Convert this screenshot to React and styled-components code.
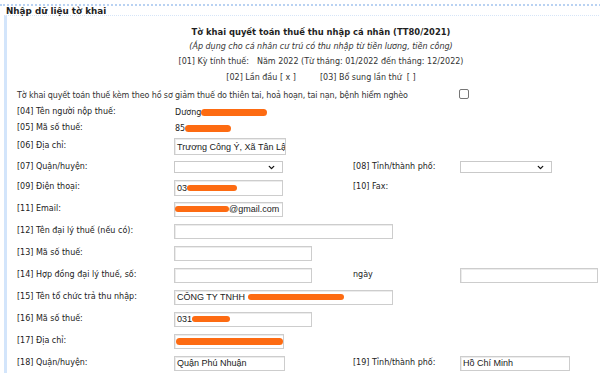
import React from "react";
import styled, { createGlobalStyle } from "styled-components";
import { ChevronDown } from "lucide-react";

const GlobalStyle = createGlobalStyle`
  html, body {
    margin: 0;
    padding: 0;
    background: #fff;
    overflow: hidden;
  }
  body {
    font-family: "DejaVu Sans", Verdana, sans-serif;
    font-size: 8px;
    color: #2b2b2b;
  }
`;

const Page = styled.div`
  width: 640px;
  padding-top: 4px;
`;

const Legend = styled.div`
  border-top: 2px dotted #b9d2f2;
  height: 9px;
  padding: 0 0 0 6px;
  font-size: 8.8px;
  line-height: 10px;
  font-weight: 700;
  color: #1f1f1f;
`;

const Panel = styled.div`
  margin-left: 4px;
  width: 628px;
  border-left: 3px solid #d3e5fb;
  border-top: 1px dotted #d6e5f8;
  padding-top: 8px;
`;

const Center = styled.div`
  height: ${(p) => p.$h || 15}px;
  display: flex;
  justify-content: center;
  align-items: center;
  gap: ${(p) => p.$gap || 0}px;
  font-size: ${(p) => (p.$bold ? 8.4 : 8)}px;
  font-weight: ${(p) => (p.$bold ? 700 : 400)};
  font-style: ${(p) => (p.$italic ? "italic" : "normal")};
  color: ${(p) => (p.$bold ? "#1f1f1f" : "#333")};
  white-space: pre;
`;

const Row = styled.div`
  display: grid;
  grid-template-columns: 157px 179px 107px 1fr;
  align-items: center;
  height: ${(p) => p.$h}px;
  padding-left: 10px;
`;

const Wide = styled.div`
  grid-column: 1 / 4;
  color: #333;
  white-space: nowrap;
  letter-spacing: -0.12px;
`;

const Label = styled.div`
  color: #222;
  padding-bottom: 2px;
  white-space: nowrap;
`;

const Value = styled.div`
  display: flex;
  align-items: center;
  color: #222;
  padding-left: 1px;
`;

const Field = styled.div`
  box-sizing: border-box;
  width: ${(p) => p.$w}px;
  height: ${(p) => p.$h || 15}px;
  border: 1px solid #cdcdcd;
  box-shadow: inset 1px 1px 0 #ececec;
  background: #fff;
  display: flex;
  align-items: center;
  padding-left: 2px;
  font-family: "Liberation Sans", Arial, sans-serif;
  font-size: 9px;
  color: #1a1a1a;
  overflow: hidden;
  white-space: nowrap;
`;

const Select = styled.div`
  box-sizing: border-box;
  width: ${(p) => p.$w}px;
  height: 12px;
  border: 1px solid #c9c9c9;
  background: #fff;
  display: flex;
  justify-content: flex-end;
  align-items: center;
  padding-right: 6px;
  color: #111;
`;

const Blob = styled.span`
  display: inline-block;
  width: ${(p) => p.$w}px;
  height: ${(p) => p.$h || 6}px;
  background: #fd6b12;
  border-radius: 4px;
  margin-left: ${(p) => p.$ml || 0}px;
  filter: blur(0.3px);
`;

const Check = styled.span`
  display: inline-block;
  width: 8px;
  height: 8px;
  border: 1px solid #767676;
  border-radius: 2px;
  margin-left: -1px;
`;

export default function App() {
  return (
    <Page>
      <GlobalStyle />
      <Legend>Nhập dữ liệu tờ khai</Legend>
      <Panel>
        <Center $bold>Tờ khai quyết toán thuế thu nhập cá nhân (TT80/2021)</Center>
        <Center $italic>(Áp dụng cho cá nhân cư trú có thu nhập từ tiền lương, tiền công)</Center>
        <Center $gap={8}>
          <span>[01] Kỳ tính thuế:</span>
          <span>Năm 2022 (Từ tháng: 01/2022 đến tháng: 12/2022)</span>
        </Center>
        <Center $h={17} $gap={24}>
          <span>[02] Lần đầu [ x ]</span>
          <span>[03] Bổ sung lần thứ  [ ]</span>
        </Center>
        <Row $h={18}>
          <Wide>
            Tờ khai quyết toán thuế kèm theo hồ sơ giảm thuế do thiên tai, hoả hoạn, tai nạn, bệnh hiểm nghèo
          </Wide>
          <div>
            <Check />
          </div>
        </Row>

        <Row $h={16}>
          <Label>[04] Tên người nộp thuế:</Label>
          <Value>
            Dương
            <Blob $w={66} $h={7} />
          </Value>
        </Row>
        <Row $h={16}>
          <Label>[05] Mã số thuế:</Label>
          <Value>
            85
            <Blob $w={46} $h={7} />
          </Value>
        </Row>
        <Row $h={21}>
          <Label>[06] Địa chỉ:</Label>
          <Field $w={112} $h={17}>
            Trương Công Ý, Xã Tân Lập
          </Field>
        </Row>
        <Row $h={20}>
          <Label>[07] Quận/huyện:</Label>
          <Select $w={109}>
            <ChevronDown size={9} strokeWidth={3.5} />
          </Select>
          <Label>[08] Tỉnh/thành phố:</Label>
          <Select $w={92}>
            <ChevronDown size={9} strokeWidth={3.5} />
          </Select>
        </Row>
        <Row $h={21}>
          <Label>[09] Điện thoại:</Label>
          <Field $w={109} $h={16}>
            03
            <Blob $w={50} />
          </Field>
          <Label>[10] Fax:</Label>
        </Row>
        <Row $h={22}>
          <Label>[11] Email:</Label>
          <Field $w={109}>
            <Blob $w={54} $ml={-2} />
            @gmail.com
          </Field>
        </Row>
        <Row $h={22}>
          <Label>[12] Tên đại lý thuế (nếu có):</Label>
          <Field $w={219} />
        </Row>
        <Row $h={22}>
          <Label>[13] Mã số thuế:</Label>
          <Field $w={138} />
        </Row>
        <Row $h={22}>
          <Label>[14] Hợp đồng đại lý thuế, số:</Label>
          <Field $w={138} />
          <Label>ngày</Label>
          <Field $w={138} />
        </Row>
        <Row $h={22}>
          <Label>[15] Tên tổ chức trả thu nhập:</Label>
          <Field $w={219}>
            CÔNG TY TNHH
            <Blob $w={96} $ml={3} />
          </Field>
        </Row>
        <Row $h={22}>
          <Label>[16] Mã số thuế:</Label>
          <Field $w={138}>
            031
            <Blob $w={38} />
          </Field>
        </Row>
        <Row $h={22}>
          <Label>[17] Địa chỉ:</Label>
          <Field $w={110}>
            <Blob $w={108} $h={7} $ml={-1} />
          </Field>
        </Row>
        <Row $h={22}>
          <Label>[18] Quận/huyện:</Label>
          <Field $w={111}>Quận Phú Nhuận</Field>
          <Label>[19] Tỉnh/thành phố:</Label>
          <Field $w={110}>Hồ Chí Minh</Field>
        </Row>
      </Panel>
    </Page>
  );
}
